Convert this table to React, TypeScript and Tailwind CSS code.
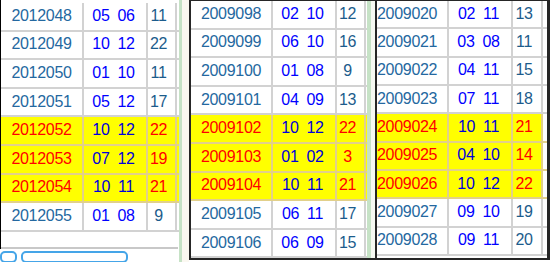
import clsx from "clsx";

type Draw = { id: string; a: string; b: string; sum: string; hot?: boolean };

type Layout = {
  row: string;
  id: string;
  nums: string;
  sum: string;
  tail: string;
};

const first: Draw[] = [
  { id: "2012048", a: "05", b: "06", sum: "11" },
  { id: "2012049", a: "10", b: "12", sum: "22" },
  { id: "2012050", a: "01", b: "10", sum: "11" },
  { id: "2012051", a: "05", b: "12", sum: "17" },
  { id: "2012052", a: "10", b: "12", sum: "22", hot: true },
  { id: "2012053", a: "07", b: "12", sum: "19", hot: true },
  { id: "2012054", a: "10", b: "11", sum: "21", hot: true },
  { id: "2012055", a: "01", b: "08", sum: "9" },
];

const second: Draw[] = [
  { id: "2009098", a: "02", b: "10", sum: "12" },
  { id: "2009099", a: "06", b: "10", sum: "16" },
  { id: "2009100", a: "01", b: "08", sum: "9" },
  { id: "2009101", a: "04", b: "09", sum: "13" },
  { id: "2009102", a: "10", b: "12", sum: "22", hot: true },
  { id: "2009103", a: "01", b: "02", sum: "3", hot: true },
  { id: "2009104", a: "10", b: "11", sum: "21", hot: true },
  { id: "2009105", a: "06", b: "11", sum: "17" },
  { id: "2009106", a: "06", b: "09", sum: "15" },
];

const third: Draw[] = [
  { id: "2009020", a: "02", b: "11", sum: "13" },
  { id: "2009021", a: "03", b: "08", sum: "11" },
  { id: "2009022", a: "04", b: "11", sum: "15" },
  { id: "2009023", a: "07", b: "11", sum: "18" },
  { id: "2009024", a: "10", b: "11", sum: "21", hot: true },
  { id: "2009025", a: "04", b: "10", sum: "14", hot: true },
  { id: "2009026", a: "10", b: "12", sum: "22", hot: true },
  { id: "2009027", a: "09", b: "10", sum: "19" },
  { id: "2009028", a: "09", b: "11", sum: "20" },
];

const layoutA: Layout = {
  row: "h-[28.6px]",
  id: "w-[83px] justify-center",
  nums: "w-[64px]",
  sum: "w-[29px]",
  tail: "w-[2px]",
};

const layoutB: Layout = {
  row: "h-[28.6px]",
  id: "w-[82px] justify-center",
  nums: "w-[64px]",
  sum: "w-[29px]",
  tail: "w-[1px]",
};

const layoutC: Layout = {
  row: "h-[28.35px]",
  id: "w-[72px] justify-start",
  nums: "w-[64px]",
  sum: "w-[30px]",
  tail: "w-[4px] bg-white",
};

function DrawRow({ d, l }: { d: Draw; l: Layout }) {
  const line = d.hot ? "border-[#e2d08a]" : "border-[#d2d2d2]";

  return (
    <div
      className={clsx(
        "flex shrink-0 border-b-2",
        l.row,
        line,
        d.hot ? "bg-[#ffff00]" : "bg-white"
      )}
    >
      <div
        className={clsx(
          "flex items-center border-r-2 pb-[1px]",
          l.id,
          line,
          d.hot ? "text-[#ff0000]" : "text-[#2468a0]"
        )}
      >
        {d.id}
      </div>
      <div
        className={clsx(
          "flex items-center justify-center gap-[8px] border-r-2 pb-[1px] pr-[3px]",
          l.nums,
          line,
          d.hot ? "text-[#0000dc]" : "text-[#0000ff]"
        )}
      >
        <span>{d.a}</span>
        <span>{d.b}</span>
      </div>
      <div
        className={clsx(
          "flex items-center justify-center border-r-2 pb-[1px] pr-[6px]",
          l.sum,
          line,
          d.hot ? "text-[#ff0000]" : "text-[#1c5c8c]"
        )}
      >
        {d.sum}
      </div>
      <div className={l.tail} />
    </div>
  );
}

export default function App() {
  return (
    <div className="flex h-[262px] w-[550px] overflow-hidden bg-white font-['Liberation_Sans',Arial,sans-serif] text-[16px] leading-none tracking-[-0.3px]">
      {/* left sheet */}
      <div className="flex h-full w-[189px] shrink-0">
        <div className="flex w-[179px] flex-col">
          <div className="flex h-[256px] flex-col border-l border-black pt-[3px]">
            {first.map((d) => (
              <DrawRow key={d.id} d={d} l={layoutA} />
            ))}
            <div className="h-[15px] shrink-0" />
            <div className="h-[2px] w-[177px] shrink-0 bg-[#c8c8c8]" />
          </div>
          <div className="flex gap-[4px] pt-[2px]">
            <div className="h-[12px] w-[17px] rounded-[5px] border-2 border-[#45a5e8]" />
            <div className="h-[12px] w-[107px] rounded-[5px] border-2 border-[#45a5e8]" />
          </div>
        </div>
        <div className="w-[3px] bg-[#c6e2c6]" />
        <div className="w-[7px] bg-[#fbf8f1]" />
      </div>

      {/* middle sheet */}
      <div className="flex h-[260px] w-[186px] shrink-0 border-b-2 border-l-2 border-t border-[#262626]">
        <div className="flex w-[176px] flex-col">
          {second.map((d) => (
            <DrawRow key={d.id} d={d} l={layoutB} />
          ))}
        </div>
        <div className="w-[4px] bg-[#c6e2c6]" />
        <div className="w-[4px] bg-[#f6f9f2]" />
      </div>

      {/* right sheet */}
      <div className="flex h-[260px] w-[175px] shrink-0 flex-col border-b-2 border-l-2 border-r-[3px] border-t border-[#262626]">
        {third.map((d) => (
          <DrawRow key={d.id} d={d} l={layoutC} />
        ))}
      </div>
    </div>
  );
}
